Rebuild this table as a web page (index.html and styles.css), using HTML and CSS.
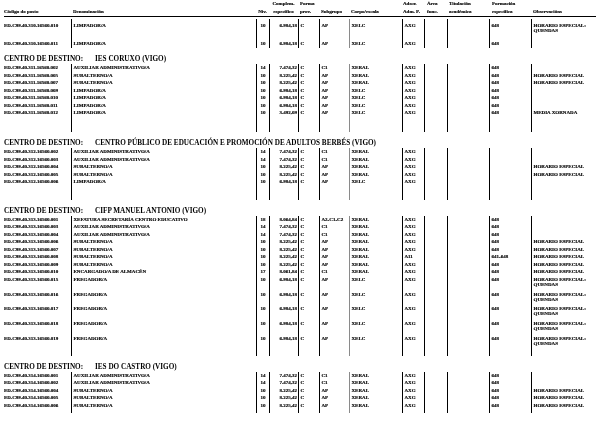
FILE: index.html
```html
<!DOCTYPE html>
<html lang="gl">
<head>
<meta charset="utf-8">
<title>Relación de postos</title>
<link rel="stylesheet" href="styles.css">
</head>
<body>
<div class="page">
  <div class="head">
    <span>Código do posto</span>
    <span>Denominación</span>
    <span>Niv.</span>
    <span>Complem.<br>específico</span>
    <span>Forma<br>prov.</span>
    <span>Subgrupo</span>
    <span>Corpo/escala</span>
    <span>Adscr.<br>Adm. P.</span>
    <span>Área<br>func.</span>
    <span>Titulación<br>académica</span>
    <span>Formación<br>específica</span>
    <span>Observacións</span>
  </div>

  <div class="block b1">
    <div class="row tall"><span>ED.C99.40.310.16560.010</span><span>LIMPADOR/A</span><span>10</span><span>6.984,18</span><span>C</span><span>AP</span><span>XELC</span><span>AXG</span><span></span><span></span><span>648</span><span>HORARIO ESPECIAL:<br>QUENDAS</span></div>
    <div class="row tall2"><span>ED.C99.40.310.16560.011</span><span>LIMPADOR/A</span><span>10</span><span>6.984,18</span><span>C</span><span>AP</span><span>XELC</span><span>AXG</span><span></span><span></span><span>648</span><span></span></div>
  </div>

  <div class="dest"><span class="lbl">CENTRO DE DESTINO:</span><span>IES CORUXO (VIGO)</span></div>
  <div class="block">
    <div class="row"><span>ED.C99.40.311.16560.002</span><span>AUXILIAR ADMINISTRATIVO/A</span><span>14</span><span>7.474,32</span><span>C</span><span>C1</span><span>XERAL</span><span>AXG</span><span></span><span></span><span>648</span><span></span></div>
    <div class="row"><span>ED.C99.40.311.16560.005</span><span>SUBALTERNO/A</span><span>10</span><span>8.225,42</span><span>C</span><span>AP</span><span>XERAL</span><span>AXG</span><span></span><span></span><span>648</span><span>HORARIO ESPECIAL</span></div>
    <div class="row"><span>ED.C99.40.311.16560.007</span><span>SUBALTERNO/A</span><span>10</span><span>8.225,42</span><span>C</span><span>AP</span><span>XERAL</span><span>AXG</span><span></span><span></span><span>648</span><span>HORARIO ESPECIAL</span></div>
    <div class="row"><span>ED.C99.40.311.16560.009</span><span>LIMPADOR/A</span><span>10</span><span>6.984,18</span><span>C</span><span>AP</span><span>XELC</span><span>AXG</span><span></span><span></span><span>648</span><span></span></div>
    <div class="row"><span>ED.C99.40.311.16560.010</span><span>LIMPADOR/A</span><span>10</span><span>6.984,18</span><span>C</span><span>AP</span><span>XELC</span><span>AXG</span><span></span><span></span><span>648</span><span></span></div>
    <div class="row"><span>ED.C99.40.311.16560.011</span><span>LIMPADOR/A</span><span>10</span><span>6.984,18</span><span>C</span><span>AP</span><span>XELC</span><span>AXG</span><span></span><span></span><span>648</span><span></span></div>
    <div class="row"><span>ED.C99.40.311.16560.012</span><span>LIMPADOR/A</span><span>10</span><span>3.492,09</span><span>C</span><span>AP</span><span>XELC</span><span>AXG</span><span></span><span></span><span>648</span><span>MEDIA XORNADA</span></div>
    <div class="row tail t16"><span></span><span></span><span></span><span></span><span></span><span></span><span></span><span></span><span></span><span></span><span></span><span></span></div>
  </div>

  <div class="dest"><span class="lbl">CENTRO DE DESTINO:</span><span>CENTRO PÚBLICO DE EDUCACIÓN E PROMOCIÓN DE ADULTOS BERBÉS (VIGO)</span></div>
  <div class="block">
    <div class="row"><span>ED.C99.40.312.16560.002</span><span>AUXILIAR ADMINISTRATIVO/A</span><span>14</span><span>7.474,32</span><span>C</span><span>C1</span><span>XERAL</span><span>AXG</span><span></span><span></span><span></span><span></span></div>
    <div class="row"><span>ED.C99.40.312.16560.003</span><span>AUXILIAR ADMINISTRATIVO/A</span><span>14</span><span>7.474,32</span><span>C</span><span>C1</span><span>XERAL</span><span>AXG</span><span></span><span></span><span></span><span></span></div>
    <div class="row"><span>ED.C99.40.312.16560.004</span><span>SUBALTERNO/A</span><span>10</span><span>8.225,42</span><span>C</span><span>AP</span><span>XERAL</span><span>AXG</span><span></span><span></span><span></span><span>HORARIO ESPECIAL</span></div>
    <div class="row"><span>ED.C99.40.312.16560.005</span><span>SUBALTERNO/A</span><span>10</span><span>8.225,42</span><span>C</span><span>AP</span><span>XERAL</span><span>AXG</span><span></span><span></span><span></span><span>HORARIO ESPECIAL</span></div>
    <div class="row"><span>ED.C99.40.312.16560.006</span><span>LIMPADOR/A</span><span>10</span><span>6.984,18</span><span>C</span><span>AP</span><span>XELC</span><span>AXG</span><span></span><span></span><span></span><span></span></div>
    <div class="row tail t14"><span></span><span></span><span></span><span></span><span></span><span></span><span></span><span></span><span></span><span></span><span></span><span></span></div>
  </div>

  <div class="dest"><span class="lbl">CENTRO DE DESTINO:</span><span>CIFP MANUEL ANTONIO (VIGO)</span></div>
  <div class="block">
    <div class="row"><span>ED.C99.40.313.16560.001</span><span>XEFATURA SECRETARÍA CENTRO EDUCATIVO</span><span>18</span><span>8.064,84</span><span>C</span><span>A2-C1-C2</span><span>XERAL</span><span>AXG</span><span></span><span></span><span>648</span><span></span></div>
    <div class="row"><span>ED.C99.40.313.16560.003</span><span>AUXILIAR ADMINISTRATIVO/A</span><span>14</span><span>7.474,32</span><span>C</span><span>C1</span><span>XERAL</span><span>AXG</span><span></span><span></span><span>648</span><span></span></div>
    <div class="row"><span>ED.C99.40.313.16560.004</span><span>AUXILIAR ADMINISTRATIVO/A</span><span>14</span><span>7.474,32</span><span>C</span><span>C1</span><span>XERAL</span><span>AXG</span><span></span><span></span><span>648</span><span></span></div>
    <div class="row"><span>ED.C99.40.313.16560.006</span><span>SUBALTERNO/A</span><span>10</span><span>8.225,42</span><span>C</span><span>AP</span><span>XERAL</span><span>AXG</span><span></span><span></span><span>648</span><span>HORARIO ESPECIAL</span></div>
    <div class="row"><span>ED.C99.40.313.16560.007</span><span>SUBALTERNO/A</span><span>10</span><span>8.225,42</span><span>C</span><span>AP</span><span>XERAL</span><span>AXG</span><span></span><span></span><span>648</span><span>HORARIO ESPECIAL</span></div>
    <div class="row"><span>ED.C99.40.313.16560.008</span><span>SUBALTERNO/A</span><span>10</span><span>8.225,42</span><span>C</span><span>AP</span><span>XERAL</span><span>A11</span><span></span><span></span><span>641-648</span><span>HORARIO ESPECIAL</span></div>
    <div class="row"><span>ED.C99.40.313.16560.009</span><span>SUBALTERNO/A</span><span>10</span><span>8.225,42</span><span>C</span><span>AP</span><span>XERAL</span><span>AXG</span><span></span><span></span><span>648</span><span>HORARIO ESPECIAL</span></div>
    <div class="row"><span>ED.C99.40.313.16560.010</span><span>ENCARGADO/A DE ALMACÉN</span><span>17</span><span>8.061,84</span><span>C</span><span>C1</span><span>XERAL</span><span>AXG</span><span></span><span></span><span>648</span><span>HORARIO ESPECIAL</span></div>
    <div class="row dbl"><span>ED.C99.40.313.16560.015</span><span>FREGADOR/A</span><span>10</span><span>6.984,18</span><span>C</span><span>AP</span><span>XELC</span><span>AXG</span><span></span><span></span><span>648</span><span>HORARIO ESPECIAL:<br>QUENDAS</span></div>
    <div class="row dbl"><span>ED.C99.40.313.16560.016</span><span>FREGADOR/A</span><span>10</span><span>6.984,18</span><span>C</span><span>AP</span><span>XELC</span><span>AXG</span><span></span><span></span><span>648</span><span>HORARIO ESPECIAL:<br>QUENDAS</span></div>
    <div class="row dbl"><span>ED.C99.40.313.16560.017</span><span>FREGADOR/A</span><span>10</span><span>6.984,18</span><span>C</span><span>AP</span><span>XELC</span><span>AXG</span><span></span><span></span><span>648</span><span>HORARIO ESPECIAL:<br>QUENDAS</span></div>
    <div class="row dbl"><span>ED.C99.40.313.16560.018</span><span>FREGADOR/A</span><span>10</span><span>6.984,18</span><span>C</span><span>AP</span><span>XELC</span><span>AXG</span><span></span><span></span><span>648</span><span>HORARIO ESPECIAL:<br>QUENDAS</span></div>
    <div class="row dbl"><span>ED.C99.40.313.16560.019</span><span>FREGADOR/A</span><span>10</span><span>6.984,18</span><span>C</span><span>AP</span><span>XELC</span><span>AXG</span><span></span><span></span><span>648</span><span>HORARIO ESPECIAL:<br>QUENDAS</span></div>
    <div class="row tail t6"><span></span><span></span><span></span><span></span><span></span><span></span><span></span><span></span><span></span><span></span><span></span><span></span></div>
  </div>

  <div class="dest"><span class="lbl">CENTRO DE DESTINO:</span><span>IES DO CASTRO (VIGO)</span></div>
  <div class="block">
    <div class="row"><span>ED.C99.40.314.16560.001</span><span>AUXILIAR ADMINISTRATIVO/A</span><span>14</span><span>7.474,32</span><span>C</span><span>C1</span><span>XERAL</span><span>AXG</span><span></span><span></span><span>648</span><span></span></div>
    <div class="row"><span>ED.C99.40.314.16560.002</span><span>AUXILIAR ADMINISTRATIVO/A</span><span>14</span><span>7.474,32</span><span>C</span><span>C1</span><span>XERAL</span><span>AXG</span><span></span><span></span><span>648</span><span></span></div>
    <div class="row"><span>ED.C99.40.314.16560.004</span><span>SUBALTERNO/A</span><span>10</span><span>8.225,42</span><span>C</span><span>AP</span><span>XERAL</span><span>AXG</span><span></span><span></span><span>648</span><span>HORARIO ESPECIAL</span></div>
    <div class="row"><span>ED.C99.40.314.16560.005</span><span>SUBALTERNO/A</span><span>10</span><span>8.225,42</span><span>C</span><span>AP</span><span>XERAL</span><span>AXG</span><span></span><span></span><span>648</span><span>HORARIO ESPECIAL</span></div>
    <div class="row"><span>ED.C99.40.314.16560.006</span><span>SUBALTERNO/A</span><span>10</span><span>8.225,42</span><span>C</span><span>AP</span><span>XERAL</span><span>AXG</span><span></span><span></span><span>648</span><span>HORARIO ESPECIAL</span></div>
    <div class="row tail t4"><span></span><span></span><span></span><span></span><span></span><span></span><span></span><span></span><span></span><span></span><span></span><span></span></div>
  </div>
</div>
</body>
</html>
```

FILE: styles.css
```css
* {
  box-sizing: border-box;
  margin: 0;
  padding: 0;
}

html, body {
  background: #fff;
}

body {
  margin: 0;
  color: #000;
  font-family: "Liberation Serif", "Times New Roman", serif;
  font-weight: bold;
}

.page {
  width: 616px;
  padding-left: 4px;
  background: #fff;
  filter: grayscale(100%);
}

/* column header */
.head {
  display: grid;
  grid-template-columns: 67px 185px 13px 29px 21px 30px 53px 22px 23px 42px 42px 65px;
  width: 592px;
  height: 17px;
  align-items: end;
  font-size: 5px;
  line-height: 8px;
  padding-bottom: 1px;
  border-bottom: 1px solid #000;
  white-space: nowrap;
  -webkit-text-stroke: 0.15px #000;
}

.head > span:nth-child(2) { padding-left: 2px; }
.head > span:nth-child(3) { text-align: center; }
.head > span:nth-child(4) { text-align: center; }
.head > span:nth-child(5) { padding-left: 2px; }
.head > span:nth-child(6) { padding-left: 2px; }
.head > span:nth-child(7) { padding-left: 2px; }
.head > span:nth-child(8) { padding-left: 1px; }
.head > span:nth-child(9) { padding-left: 3px; }
.head > span:nth-child(10) { padding-left: 2px; }
.head > span:nth-child(11) { padding-left: 3px; }
.head > span:nth-child(12) { padding-left: 2px; }

/* centre heading */
.dest {
  display: flex;
  margin-top: 7px;
  font-size: 7.2px;
  line-height: 9px;
  white-space: nowrap;
}

.dest .lbl {
  width: 91px;
  flex: none;
}

/* table blocks */
.b1 {
  margin-top: 2px;
}

.row {
  display: grid;
  grid-template-columns: 67px 185px 13px 29px 21px 30px 53px 22px 23px 42px 42px 80px;
  height: 7.5px;
  font-size: 5px;
  line-height: 5px;
  white-space: nowrap;
  -webkit-text-stroke: 0.15px #000;
}

.row > span {
  border-left: 1px solid #000;
  padding-top: 1.25px;
  padding-left: 1.5px;
  overflow: visible;
}

.row > span:first-child {
  border-left: none;
  padding-left: 0;
}

.row > span:nth-child(3) {
  text-align: center;
  padding-left: 0;
}

.row > span:nth-child(4) {
  text-align: right;
  padding-left: 0;
  padding-right: 1px;
}

.row > span:nth-child(7) {
  border-left-color: #8a8a8a;
}

.row > span:nth-child(12) {
  border-left-width: 1.5px;
}

.row.tall {
  height: 18px;
}

.row.tall2 {
  height: 11px;
}

.row.tall > span,
.row.tall2 > span {
  padding-top: 3.5px;
}

.row.dbl {
  height: 14.75px;
}

.row.tail > span {
  padding: 0;
}

.t16 { height: 15.5px; }
.t14 { height: 14px; }
.t6 { height: 6.25px; }
.t4 { height: 4px; }
```
